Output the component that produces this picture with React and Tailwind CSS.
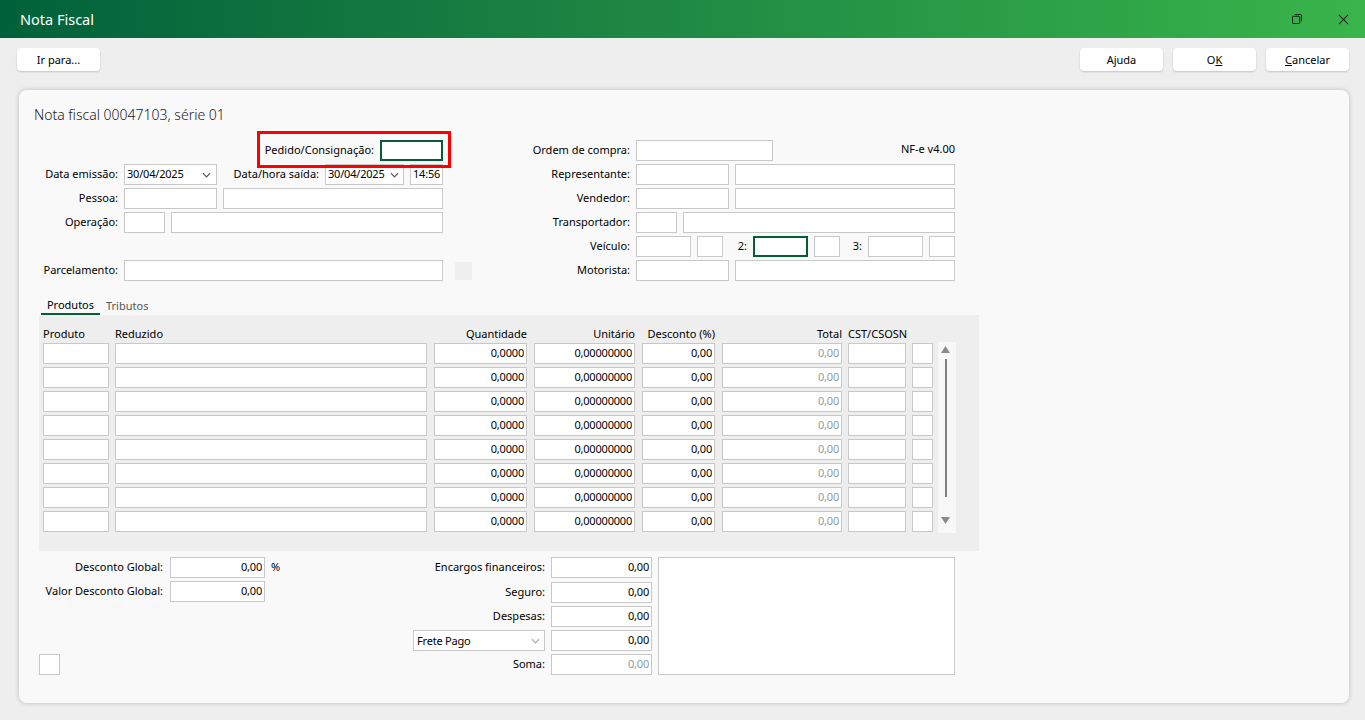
import React from "react";

function Box({ w, value, muted, focus, align = "right" }) {
  return (
    <input
      readOnly
      value={value || ""}
      style={{ width: w }}
      className={`block h-[21px] shrink-0 bg-white px-[2px] pb-[2px] text-[11px] tracking-[-0.2px] outline-none ${align === "right" ? "text-right" : "text-left"} ${muted ? "text-[#8f9aa3]" : "text-black"} ${focus ? "border-2 border-[#055c36]" : "border border-[#c8c8c8]"}`}
    />
  );
}

function Chevron({ className }) {
  return (
    <svg viewBox="0 0 10 6" className={className} fill="none" stroke="currentColor" strokeWidth="1.3">
      <path d="M1 1l4 4 4-4" />
    </svg>
  );
}

function Select({ w, value, chevron = "text-[#555555]", padRight = "pr-[5px]", padLeft = "pl-[2px]", textPad = "" }) {
  return (
    <div style={{ width: w }} className={`flex h-[21px] shrink-0 items-center justify-between border border-[#c8c8c8] bg-white ${padLeft} ${padRight} text-[11px] tracking-[-0.2px] text-black`}>
      <span className={textPad}>{value}</span>
      <Chevron className={`h-[6px] w-[9px] ${chevron}`} />
    </div>
  );
}

function Label({ w, children, className = "" }) {
  return (
    <span style={{ width: w }} className={`h-[21px] shrink-0 whitespace-nowrap pb-[2px] text-right text-[11px] leading-[19px] text-black ${className}`}>
      {children}
    </span>
  );
}

function Row({ children, className = "" }) {
  return <div className={`flex h-[21px] items-center gap-[6px] ${className}`}>{children}</div>;
}

function Btn({ children }) {
  return (
    <button className="h-[23px] w-[83px] rounded-[4px] bg-white pt-[1px] text-[11px] text-black shadow-[0_1px_2px_rgba(0,0,0,0.18)]">
      {children}
    </button>
  );
}

const colW = [66, 312, 93, 101, 73, 120, 58, 21];

function TableRow() {
  const vals = ["", "", "0,0000", "0,00000000", "0,00", "0,00", "", ""];
  return (
    <div className="grid h-[21px] grid-cols-[72px_319px_100px_108px_80px_126px_64px_21px]">
      {vals.map((v, i) => (
        <Box key={i} w={colW[i]} value={v} muted={i === 5} />
      ))}
    </div>
  );
}

export default function App() {
  return (
    <div className="flex h-[720px] w-full flex-col overflow-hidden bg-[#eeeeee] font-['Noto_Sans',sans-serif]">
      {/* Title bar */}
      <header className="flex h-[38px] shrink-0 items-center justify-between bg-linear-to-r from-[#01613a] to-[#39b54a] pl-[20px] pr-[16px]">
        <h1 className="pt-[1px] text-[14.5px] text-white">Nota Fiscal</h1>
        <div className="flex items-center gap-[36px]">
          <svg viewBox="0 0 11 11" className="h-[10px] w-[10px] text-[#1b1b1b]" fill="none" stroke="currentColor" strokeWidth="1.1">
            <rect x="0.5" y="2.5" width="8" height="8" rx="1" />
            <path d="M3 0.5h6a1.5 1.5 0 0 1 1.5 1.5v6" />
          </svg>
          <svg viewBox="0 0 12 12" className="h-[11px] w-[11px] text-[#1b1b1b]" fill="none" stroke="currentColor" strokeWidth="1.1">
            <path d="M1 1l10 10M11 1L1 11" />
          </svg>
        </div>
      </header>

      {/* Toolbar */}
      <div className="flex shrink-0 items-center justify-between pb-[19px] pl-[17px] pr-[16px] pt-[10px]">
        <Btn>Ir para...</Btn>
        <div className="flex gap-[10px]">
          <Btn>Ajuda</Btn>
          <Btn>O<span className="underline">K</span></Btn>
          <Btn><span className="underline">C</span>ancelar</Btn>
        </div>
      </div>

      {/* Main panel */}
      <main className="relative ml-[19px] h-[613px] w-[1330px] shrink-0 rounded-[8px] bg-[#f9f9f9] pl-[15px] pt-[14px] shadow-[0_0_5px_rgba(0,0,0,0.22)]">
        <h2 className="h-[22px] whitespace-nowrap text-[14px] font-light leading-[22px] text-[#222222]">Nota fiscal 00047103, série 01</h2>

        {/* Red highlight */}
        <div className="absolute left-[238px] top-[41px] h-[37px] w-[194px] border-[3px] border-[#ff0000]" />

        <div className="mt-[14px] flex">
          {/* Left form */}
          <div className="flex w-[466px] shrink-0 flex-col gap-[3px]">
            <Row className="w-[409px] justify-end">
              <Label>Pedido/Consignação:</Label>
              <Box w={63} focus />
            </Row>
            <Row>
              <Label w={84}>Data emissão:</Label>
              <Select w={93} value="30/04/2025" />
              <Label w={96}>Data/hora saída:</Label>
              <Select w={79} value="30/04/2025" padRight="pr-[4px]" />
              <Box w={33} value="14:56" />
            </Row>
            <Row>
              <Label w={84}>Pessoa:</Label>
              <Box w={93} />
              <Box w={220} />
            </Row>
            <Row>
              <Label w={84}>Operação:</Label>
              <Box w={41} />
              <Box w={272} />
            </Row>
            <div className="h-[21px]" />
            <Row>
              <Label w={84}>Parcelamento:</Label>
              <Box w={319} />
              <div className="ml-[6px] h-[18px] w-[17px] bg-[#f0f0f0]" />
            </Row>
          </div>

          {/* Right form */}
          <div className="flex w-[455px] shrink-0 flex-col gap-[3px]">
            <Row>
              <Label w={130}>Ordem de compra:</Label>
              <Box w={137} />
              <span className="flex-1 pb-[2px] text-right text-[11px] text-black">NF-e v4.00</span>
            </Row>
            <Row>
              <Label w={130}>Representante:</Label>
              <Box w={93} />
              <Box w={220} />
            </Row>
            <Row>
              <Label w={130}>Vendedor:</Label>
              <Box w={93} />
              <Box w={220} />
            </Row>
            <Row>
              <Label w={130}>Transportador:</Label>
              <Box w={41} />
              <Box w={272} />
            </Row>
            <Row>
              <Label w={130}>Veículo:</Label>
              <Box w={55} />
              <Box w={26} />
              <Label w={18}>2:</Label>
              <Box w={55} focus />
              <Box w={26} />
              <Label w={16}>3:</Label>
              <Box w={55} />
              <Box w={26} />
            </Row>
            <Row>
              <Label w={130}>Motorista:</Label>
              <Box w={93} />
              <Box w={220} />
            </Row>
          </div>
        </div>

        {/* Tabs */}
        <div className="ml-[7px] mt-[15px] flex h-[19px] items-start text-[11px]">
          <span className="h-[19px] w-[59px] border-b-2 border-[#055c36] pt-[1px] text-center text-black">Produtos</span>
          <span className="ml-[6px] pt-[2px] text-[#555555]">Tributos</span>
        </div>

        {/* Products */}
        <section className="ml-[5px] flex h-[236px] w-[940px] bg-[#eeeeee] pl-[4px] pt-[12px]">
          <div className="flex w-[890px] shrink-0 flex-col gap-[3px]">
            <div className="grid h-[13px] grid-cols-[72px_319px_100px_108px_80px_126px_64px_21px] text-[11px] leading-[14px] text-black">
              <span>Produto</span>
              <span>Reduzido</span>
              <span className="w-[93px] text-right">Quantidade</span>
              <span className="w-[101px] text-right">Unitário</span>
              <span className="w-[73px] text-right">Desconto (%)</span>
              <span className="w-[120px] text-right">Total</span>
              <span className="whitespace-nowrap">CST/CSOSN</span>
              <span />
            </div>
            {[0, 1, 2, 3, 4, 5, 6, 7].map((i) => (
              <TableRow key={i} />
            ))}
          </div>
          <div className="ml-[5px] mt-[15px] flex h-[191px] w-[18px] flex-col items-start bg-[#f8f8f8] pl-[3px] pt-[4px]">
            <svg viewBox="0 0 9 7" className="h-[7px] w-[9px] text-[#8a8a8a]" fill="currentColor"><path d="M4.5 0L9 7H0z" /></svg>
            <div className="ml-[4px] mt-[6px] h-[138px] w-[2px] bg-[#808080]" />
            <svg viewBox="0 0 9 7" className="mt-[20px] h-[7px] w-[9px] text-[#8a8a8a]" fill="currentColor"><path d="M0 0h9L4.5 7z" /></svg>
          </div>
        </section>

        {/* Bottom */}
        <section className="ml-[5px] mt-[6px] flex">
          <div className="flex w-[374px] shrink-0 flex-col gap-[3px]">
            <Row>
              <Label w={125} className="pr-[1px]">Desconto Global:</Label>
              <Box w={95} value="0,00" />
              <span className="text-[11px] text-black">%</span>
            </Row>
            <Row>
              <Label w={125} className="pr-[1px]">Valor Desconto Global:</Label>
              <Box w={95} value="0,00" />
            </Row>
            <div className="mt-[49px] h-[21px] w-[21px] border border-[#c8c8c8] bg-white" />
          </div>
          <div className="flex w-[239px] shrink-0 flex-col gap-[3px]">
            <Row className="mb-[1px]">
              <Label w={132}>Encargos financeiros:</Label>
              <Box w={101} value="0,00" />
            </Row>
            <Row>
              <Label w={132}>Seguro:</Label>
              <Box w={101} value="0,00" />
            </Row>
            <Row>
              <Label w={132}>Despesas:</Label>
              <Box w={101} value="0,00" />
            </Row>
            <Row>
              <Select w={132} value="Frete Pago" chevron="text-[#a8a8a8]" padRight="pr-[4px]" padLeft="pl-[3px]" textPad="pt-[1px]" />
              <Box w={101} value="0,00" />
            </Row>
            <Row>
              <Label w={132}>Soma:</Label>
              <Box w={101} value="0,00" muted />
            </Row>
          </div>
          <div className="ml-[6px] h-[118px] w-[297px] border border-[#c8c8c8] bg-white" />
        </section>
      </main>
    </div>
  );
}
